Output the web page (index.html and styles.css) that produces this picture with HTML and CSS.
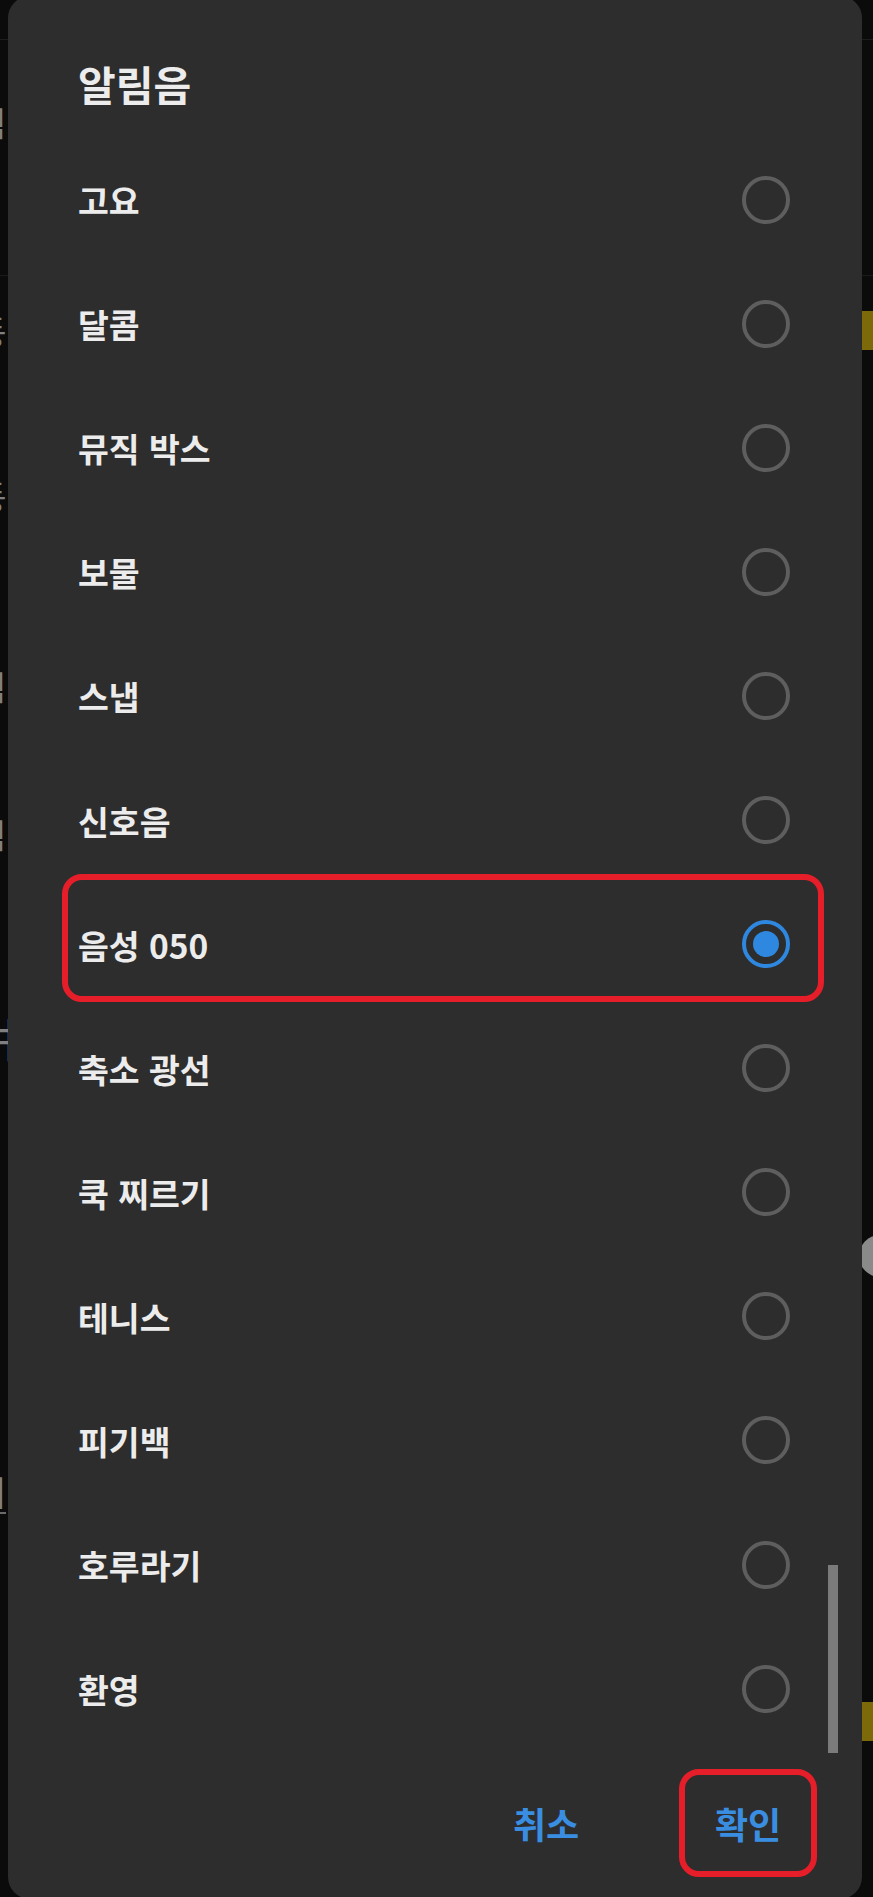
FILE: index.html
```html
<!DOCTYPE html>
<html lang="ko">
<head>
  <meta charset="UTF-8">
  <meta name="viewport" content="width=device-width, initial-scale=1.0">
  <title>알림음</title>
  <link rel="stylesheet" href="styles.css">
</head>
<body>
  <div class="screen">
    <!-- settings page behind the dialog, only its edges show -->
    <div class="backdrop">
      <div class="bg-row bg-head"></div>
      <div class="bg-row h165"><span class="bg-label">알림</span></div>
      <div class="bg-row h71 bg-line"></div>
      <div class="bg-row h109"><span class="bg-label">진동</span><span class="bg-bar"></span></div>
      <div class="bg-row h221"><span class="bg-label">진동</span></div>
      <div class="bg-row h161"><span class="bg-label">알림</span></div>
      <div class="bg-row h135"><span class="bg-label">알림</span></div>
      <div class="bg-row h269"><span class="bg-label tall">벼</span></div>
      <div class="bg-row h169"><span class="bg-label">양</span><span class="bg-knob"></span></div>
      <div class="bg-row h44"><span class="bg-label small">시</span></div>
      <div class="bg-row h217"><span class="bg-label under">벼</span></div>
      <div class="bg-row h240"><span class="bg-label">二</span><span class="bg-bar"></span></div>
    </div>

    <div class="dialog">
      <h2 class="dialog-title">알림음</h2>
      <ul class="option-list">
        <li class="option"><span class="option-label">고요</span><span class="radio"></span></li>
        <li class="option"><span class="option-label">달콤</span><span class="radio"></span></li>
        <li class="option"><span class="option-label">뮤직 박스</span><span class="radio"></span></li>
        <li class="option"><span class="option-label">보물</span><span class="radio"></span></li>
        <li class="option"><span class="option-label">스냅</span><span class="radio"></span></li>
        <li class="option"><span class="option-label">신호음</span><span class="radio"></span></li>
        <li class="option is-marked"><span class="option-label">음성 050</span><span class="radio is-checked"></span></li>
        <li class="option"><span class="option-label">축소 광선</span><span class="radio"></span></li>
        <li class="option"><span class="option-label">쿡 찌르기</span><span class="radio"></span></li>
        <li class="option"><span class="option-label">테니스</span><span class="radio"></span></li>
        <li class="option"><span class="option-label">피기백</span><span class="radio"></span></li>
        <li class="option"><span class="option-label">호루라기</span><span class="radio"></span></li>
        <li class="option"><span class="option-label">환영</span><span class="radio"></span></li>
      </ul>
      <div class="scroll-thumb"></div>
      <div class="dialog-actions">
        <button class="action-btn">취소</button>
        <button class="action-btn is-marked">확인</button>
      </div>
    </div>
  </div>
</body>
</html>
```

FILE: styles.css
```css
body {
  margin: 0;
  background-color: #0b0b0b;
  font-family: "Noto Sans CJK KR", "Noto Sans", sans-serif;
}
.screen {
  position: relative;
  width: 873px;
  height: 1897px;
  overflow: hidden;
}

/* backdrop */
.backdrop {
  display: flex;
  flex-direction: column;
}
.bg-row {
  display: flex;
  align-items: center;
  justify-content: space-between;
  box-sizing: border-box;
}
.bg-head {
  height: 40px;
  border-bottom: 1px solid #1d1d1d;
}
.bg-line {
  border-bottom: 1px solid #1a1a1a;
}
.h44 { height: 44px; }
.h71 { height: 71px; }
.h109 { height: 109px; }
.h135 { height: 135px; }
.h161 { height: 161px; }
.h165 { height: 165px; }
.h169 { height: 169px; }
.h217 { height: 217px; }
.h221 { height: 221px; }
.h240 { height: 240px; }
.h269 { height: 269px; }
.bg-label {
  margin-left: -56px;
  font-size: 34px;
  line-height: 40px;
  color: #808080;
}
.bg-label.tall {
  margin-left: -25px;
  font-size: 46px;
}
.bg-label.small {
  margin-left: -18px;
  font-size: 20px;
  line-height: 24px;
}
.bg-label.under {
  margin-left: -25px;
  border-bottom: 2px solid #6a6a6a;
}
.bg-bar {
  width: 14px;
  height: 39px;
  background-color: #7c6a0a;
}
.bg-knob {
  width: 42px;
  height: 42px;
  margin-right: -28px;
  border-radius: 50%;
  background-color: #8a8a8a;
}

/* dialog */
.dialog {
  position: absolute;
  left: 8px;
  top: -4px;
  width: 854px;
  height: 1903px;
  border-radius: 22px;
  background-color: #2d2d2d;
  display: flex;
  flex-direction: column;
}
.dialog-title {
  margin: 0;
  padding: 63px 0 0 70px;
  height: 78.5px;
  font-size: 41px;
  line-height: 48px;
  font-weight: 700;
  color: #ececec;
}
.option-list {
  list-style: none;
  margin: 0;
  padding: 0;
}
.option {
  position: relative;
  height: 124.1px;
  padding: 0 72px 0 70px;
  display: flex;
  align-items: center;
  justify-content: space-between;
}
.option-label {
  font-size: 33.5px;
  font-weight: 700;
  color: #ececec;
}
.option.is-marked::before {
  content: "";
  position: absolute;
  top: -8px;
  bottom: 4px;
  left: 54px;
  right: 38px;
  border: 6px solid #e61e2a;
  border-radius: 20px;
}
.radio {
  box-sizing: border-box;
  width: 48px;
  height: 48px;
  border: 4px solid #5e5e5e;
  border-radius: 50%;
  display: flex;
  align-items: center;
  justify-content: center;
}
.radio.is-checked {
  border-color: #2f88e0;
}
.radio.is-checked::after {
  content: "";
  width: 26px;
  height: 26px;
  border-radius: 50%;
  background-color: #2f88e0;
}
.scroll-thumb {
  position: absolute;
  left: 820px;
  top: 1569px;
  width: 10px;
  height: 188px;
  background-color: #7b7b7b;
}
.dialog-actions {
  display: flex;
  justify-content: flex-end;
  gap: 64px;
  padding: 18px 45px 0 0;
}
.action-btn {
  box-sizing: border-box;
  width: 138px;
  height: 108px;
  border: none;
  border-radius: 20px;
  background: none;
  font-family: inherit;
  font-size: 36px;
  font-weight: 700;
  color: #3a8ee2;
}
.action-btn.is-marked {
  border: 6px solid #e61e2a;
}
```
